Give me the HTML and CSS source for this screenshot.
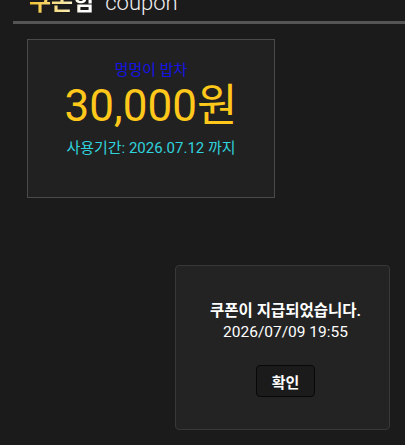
FILE: index.html
```html
<!DOCTYPE html>
<html lang="ko">
<head>
<meta charset="utf-8">
<title>쿠폰함</title>
<link rel="stylesheet" href="styles.css">
</head>
<body>
  <header class="page-head">
    <h1 class="title"><span class="title-ko">쿠폰함</span> <span class="title-en">coupon</span></h1>
  </header>
  <main class="coupons">
    <section class="coupon">
      <p class="coupon-shop">멍멍이 밥차</p>
      <p class="coupon-amount">30,000원</p>
      <p class="coupon-period">사용기간: 2026.07.12 까지</p>
    </section>
  </main>
  <div class="dialog" role="dialog">
    <p class="dialog-msg">쿠폰이 지급되었습니다.</p>
    <p class="dialog-time">2026/07/09 19:55</p>
    <button class="dialog-btn" type="button">확인</button>
  </div>
</body>
</html>
```

FILE: styles.css
```css
html, body {
  margin: 0;
  padding: 0;
  height: 100%;
}

body {
  background: #1c1b1c;
  color: #fff;
  font-family: Roboto, "Noto Sans CJK KR", sans-serif;
  position: relative;
  overflow: hidden;
}

p { margin: 0; }

.page-head {
  margin-left: 13px;
  border-bottom: 3px solid #555;
}

.title {
  margin: -12px 0 4px 16px;
  font-size: 24px;
  line-height: 28px;
  font-weight: 700;
}

.title-ko {
  background: linear-gradient(90deg, #f2c230 0%, #f7e7a4 55%, #ffffff 80%);
  -webkit-background-clip: text;
  background-clip: text;
  color: transparent;
}

.title-en {
  font-weight: 300;
  font-size: 22px;
  color: #f0f0f0;
  margin-left: 4px;
}

.coupons {
  padding: 15px 0 0 27px;
}

.coupon {
  width: 248px;
  height: 159px;
  border: 1px solid #4a4a4a;
  background: #222122;
  display: flex;
  flex-direction: column;
  align-items: center;
  padding-top: 20px;
  box-sizing: border-box;
}

.coupon-shop {
  color: #1414e6;
  font-size: 15px;
  line-height: 20px;
}

.coupon-amount {
  color: #ffc81a;
  font-size: 44px;
  line-height: 52px;
  margin-top: 0;
}

.coupon-period {
  color: #2fd3dd;
  font-size: 15px;
  line-height: 20px;
  margin-top: 6px;
}

.dialog {
  position: absolute;
  left: 175px;
  top: 265px;
  width: 215px;
  height: 165px;
  border: 1px solid #383838;
  border-radius: 4px;
  background: #232323;
  display: flex;
  flex-direction: column;
  align-items: center;
  padding: 35px 0 0 6px;
  box-sizing: border-box;
}

.dialog-msg {
  font-weight: 700;
  font-size: 15.5px;
  line-height: 21px;
  color: #fff;
}

.dialog-time {
  font-size: 15.5px;
  line-height: 21px;
  color: #fff;
}

.dialog-btn {
  margin-top: 22px;
  width: 59px;
  height: 32px;
  background: #1b1b1b;
  border: 1px solid #080808;
  border-radius: 4px;
  color: #fff;
  font-family: Roboto, "Noto Sans CJK KR", sans-serif;
  font-weight: 700;
  font-size: 15px;
  padding: 0;
}
```
